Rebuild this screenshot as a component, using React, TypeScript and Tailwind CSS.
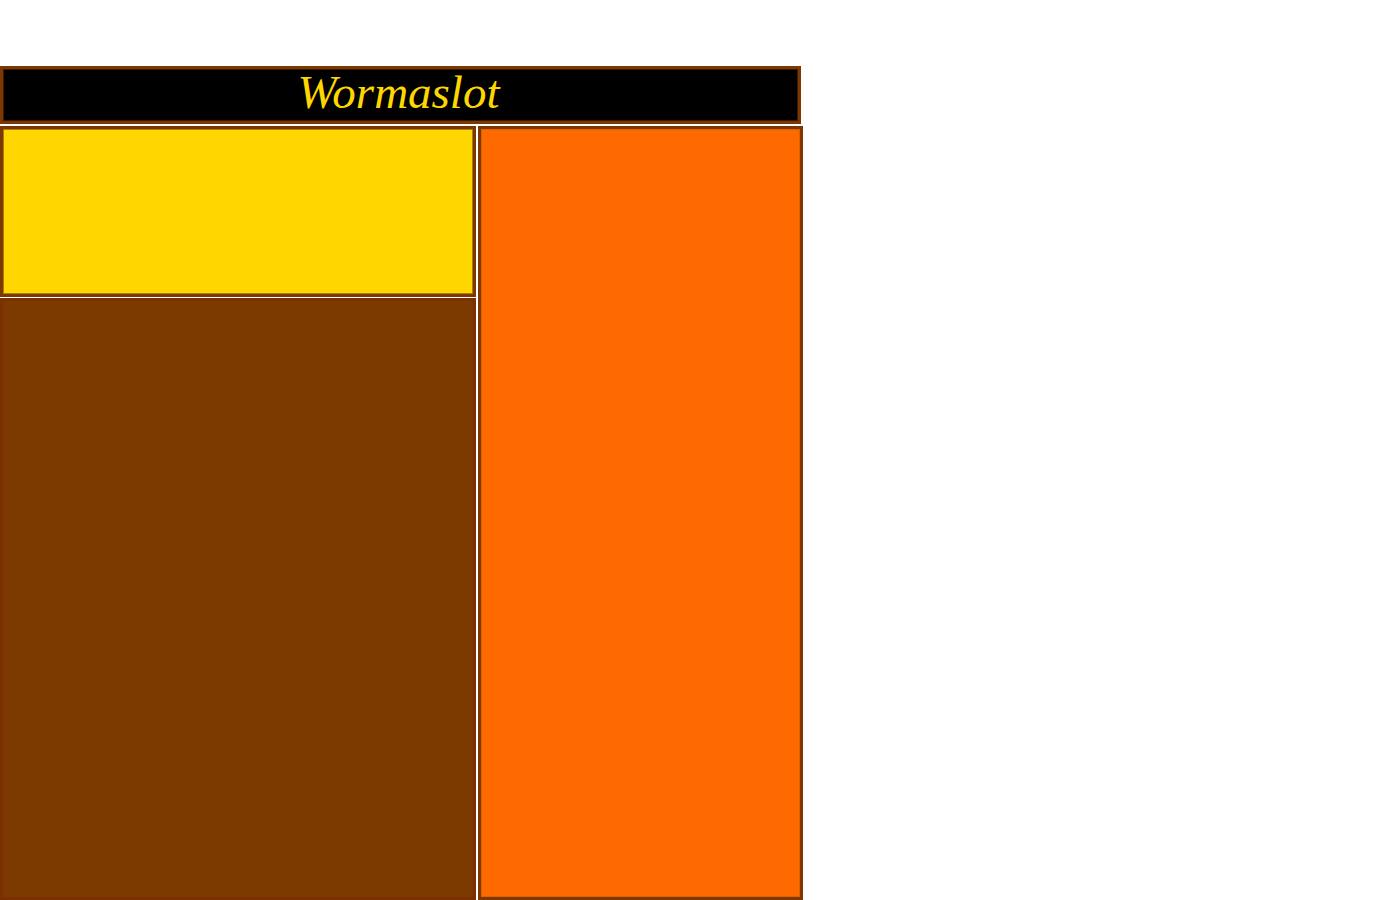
const App = () => {
  return (
    <div className="h-[900px] overflow-hidden bg-white pt-[66px]">
      {/* Title */}
      <header className="w-[801px] h-[58px] border-[3px] border-[#7c3800] bg-black text-center shadow-[inset_0_0_0_1px_#3a1a00]">
        <h1 className="font-['Liberation_Serif',serif] italic text-[47px] leading-[47px] -ml-[4px] text-[#ffd700]">Wormaslot</h1>
      </header>

      <div className="mt-[2px] flex w-[803px] gap-[2px]">
        {/* Left column */}
        <div className="flex w-[476px] flex-col gap-[1px]">
          <div className="h-[171px] border-[3px] border-[#7c3800] bg-[#ffd700] shadow-[inset_0_0_0_1px_#b07c00]" />
          <div className="h-[602px] border-[3px] border-[#7a3000] bg-[#7c3900]" />
        </div>

        {/* Right column */}
        <div className="h-[774px] w-[325px] border-[3px] border-[#7c3800] bg-[#ff6a00] shadow-[inset_0_0_0_1px_#e06000]" />
      </div>
    </div>
  );
};

export default App;
